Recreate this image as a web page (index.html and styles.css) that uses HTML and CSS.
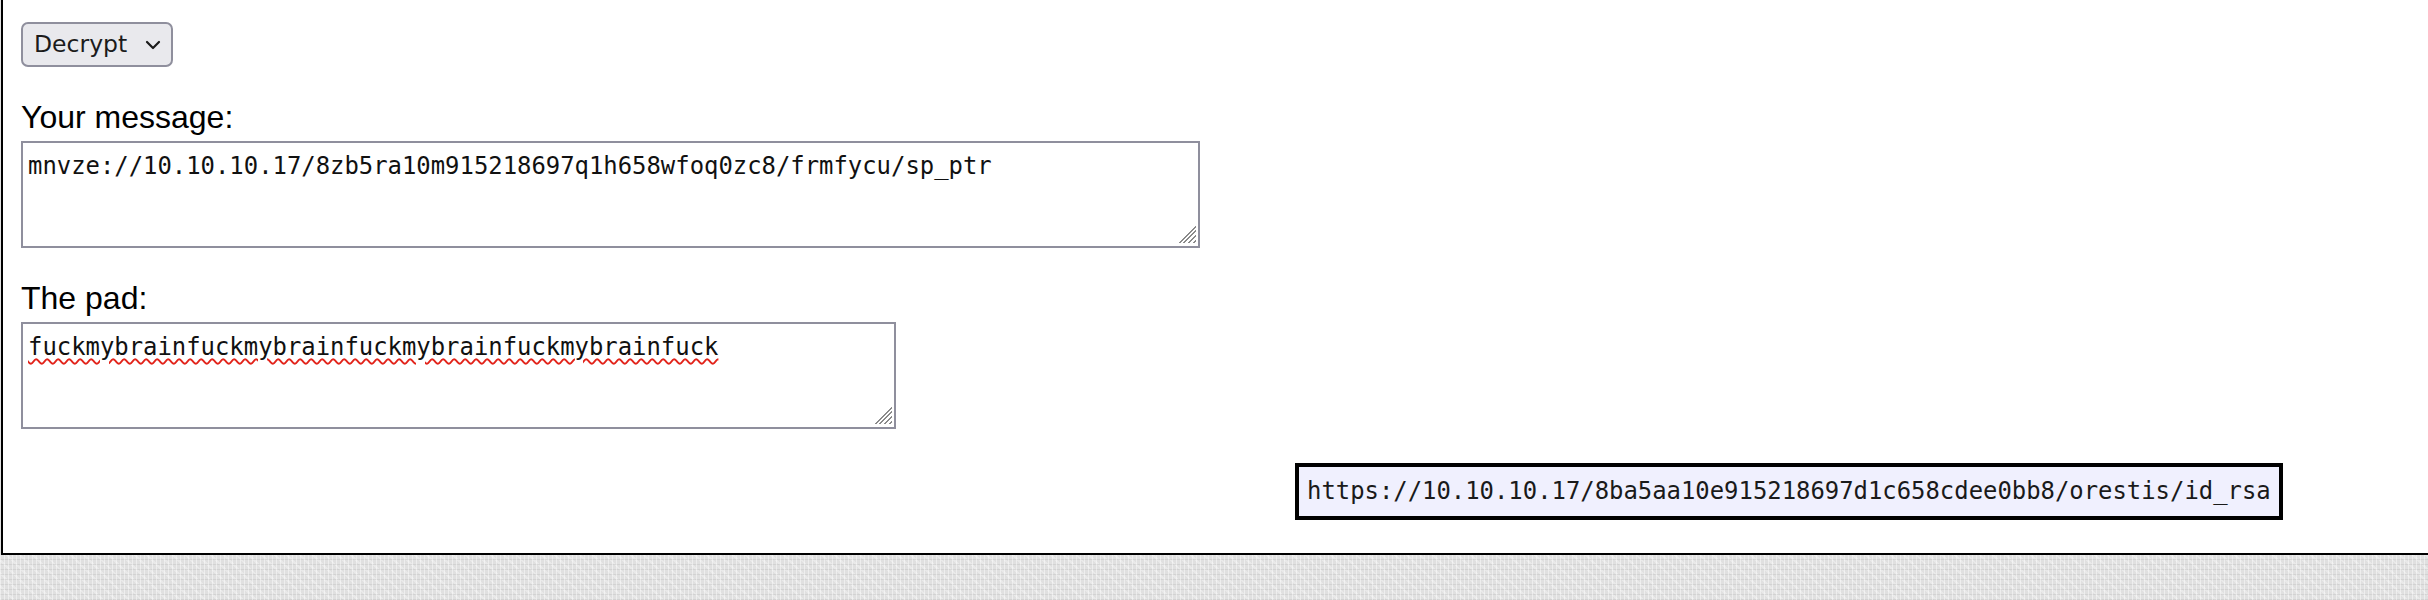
FILE: index.html
```html
<!DOCTYPE html>
<html lang="en">
<head>
<meta charset="utf-8">
<title>One-time pad</title>
<link rel="stylesheet" href="styles.css">
</head>
<body>
<div class="page">
  <div class="panel">
    <div class="select" role="combobox" aria-label="Mode">
      <span class="select-text">Decrypt</span>
      <svg class="chev" width="16" height="10" viewBox="0 0 16 10" aria-hidden="true"><path d="M2 2 L8 8 L14 2" fill="none" stroke="#1b1b1b" stroke-width="2.2" stroke-linecap="round" stroke-linejoin="round"/></svg>
    </div>
    <label class="lbl">Your message:</label>
    <div class="ta ta-msg" role="textbox">mnvze://10.10.10.17/8zb5ra10m915218697q1h658wfoq0zc8/frmfycu/sp_ptr</div>
    <label class="lbl">The pad:</label>
    <div class="ta ta-pad" role="textbox"><span class="misspelled">fuckmybrainfuckmybrainfuckmybrainfuckmybrainfuck</span></div>
    <div class="result-row">
      <code class="result">https://10.10.10.17/8ba5aa10e915218697d1c658cdee0bb8/orestis/id_rsa</code>
    </div>
  </div>
  <div class="texture"></div>
</div>
</body>
</html>
```
FILE: styles.css
```css
html, body {
  margin: 0;
  padding: 0;
  background: #ffffff;
  overflow: hidden;
}

.page {
  width: 2428px;
  height: 600px;
  display: flex;
  flex-direction: column;
  background: #e2e2e2;
}

.panel {
  margin-left: 1px;
  background: #ffffff;
  border-left: 2px solid #000;
  border-bottom: 2px solid #000;
  padding: 22px 0 33px 18px;
  display: flex;
  flex-direction: column;
  align-items: flex-start;
}

.select {
  box-sizing: border-box;
  width: 152px;
  height: 45px;
  display: flex;
  align-items: center;
  gap: 18px;
  padding: 0 0 2px 11px;
  background: #e9e9ed;
  border: 2px solid #8f8f9d;
  border-radius: 7px;
  font-family: "DejaVu Sans", sans-serif;
  font-size: 23.5px;
  color: #1b1b1b;
}

.chev {
  display: block;
  margin-top: 2px;
}

.lbl {
  display: block;
  margin-top: 32px;
  height: 36px;
  line-height: 36px;
  font-family: "Liberation Sans", Arial, sans-serif;
  font-size: 32px;
  color: #000;
}

.ta {
  position: relative;
  box-sizing: border-box;
  margin-top: 6px;
  height: 107px;
  padding: 9px 5px 5px;
  background: #fff;
  border: 2px solid #8f8f9d;
  font-family: "DejaVu Sans Mono", monospace;
  font-size: 23.9px;
  line-height: 28px;
  color: #111;
  white-space: pre;
}

.ta::after {
  content: "";
  position: absolute;
  right: 2px;
  bottom: 3px;
  width: 20px;
  height: 20px;
  background: repeating-linear-gradient(135deg, transparent 0 2px, #8a8a8a 2px 3.4px);
  clip-path: polygon(100% 0, 100% 100%, 0 100%);
}

.ta-msg {
  width: 1179px;
}

.ta-pad {
  width: 875px;
}

.misspelled {
  text-decoration: underline wavy #e2231a;
  text-decoration-thickness: 1.6px;
  text-underline-offset: 3px;
}

.result-row {
  margin-top: 34px;
  padding-left: 1274px;
}

.result {
  display: block;
  box-sizing: border-box;
  height: 57px;
  padding: 10px 8px 10px 8px;
  background: #f0f0fe;
  border: 4px solid #000;
  font-family: "DejaVu Sans Mono", monospace;
  font-size: 23.9px;
  line-height: 29px;
  color: #1a1a1a;
  white-space: pre;
}

.texture {
  flex: 1;
  background-color: #e0e0e0;
  background-image:
    repeating-linear-gradient(90deg, rgba(255,255,255,0.45) 0 1px, transparent 1px 4px),
    repeating-linear-gradient(0deg, rgba(190,190,190,0.4) 0 1px, transparent 1px 5px),
    repeating-linear-gradient(45deg, rgba(255,255,255,0.3) 0 2px, transparent 2px 9px);
}
```
